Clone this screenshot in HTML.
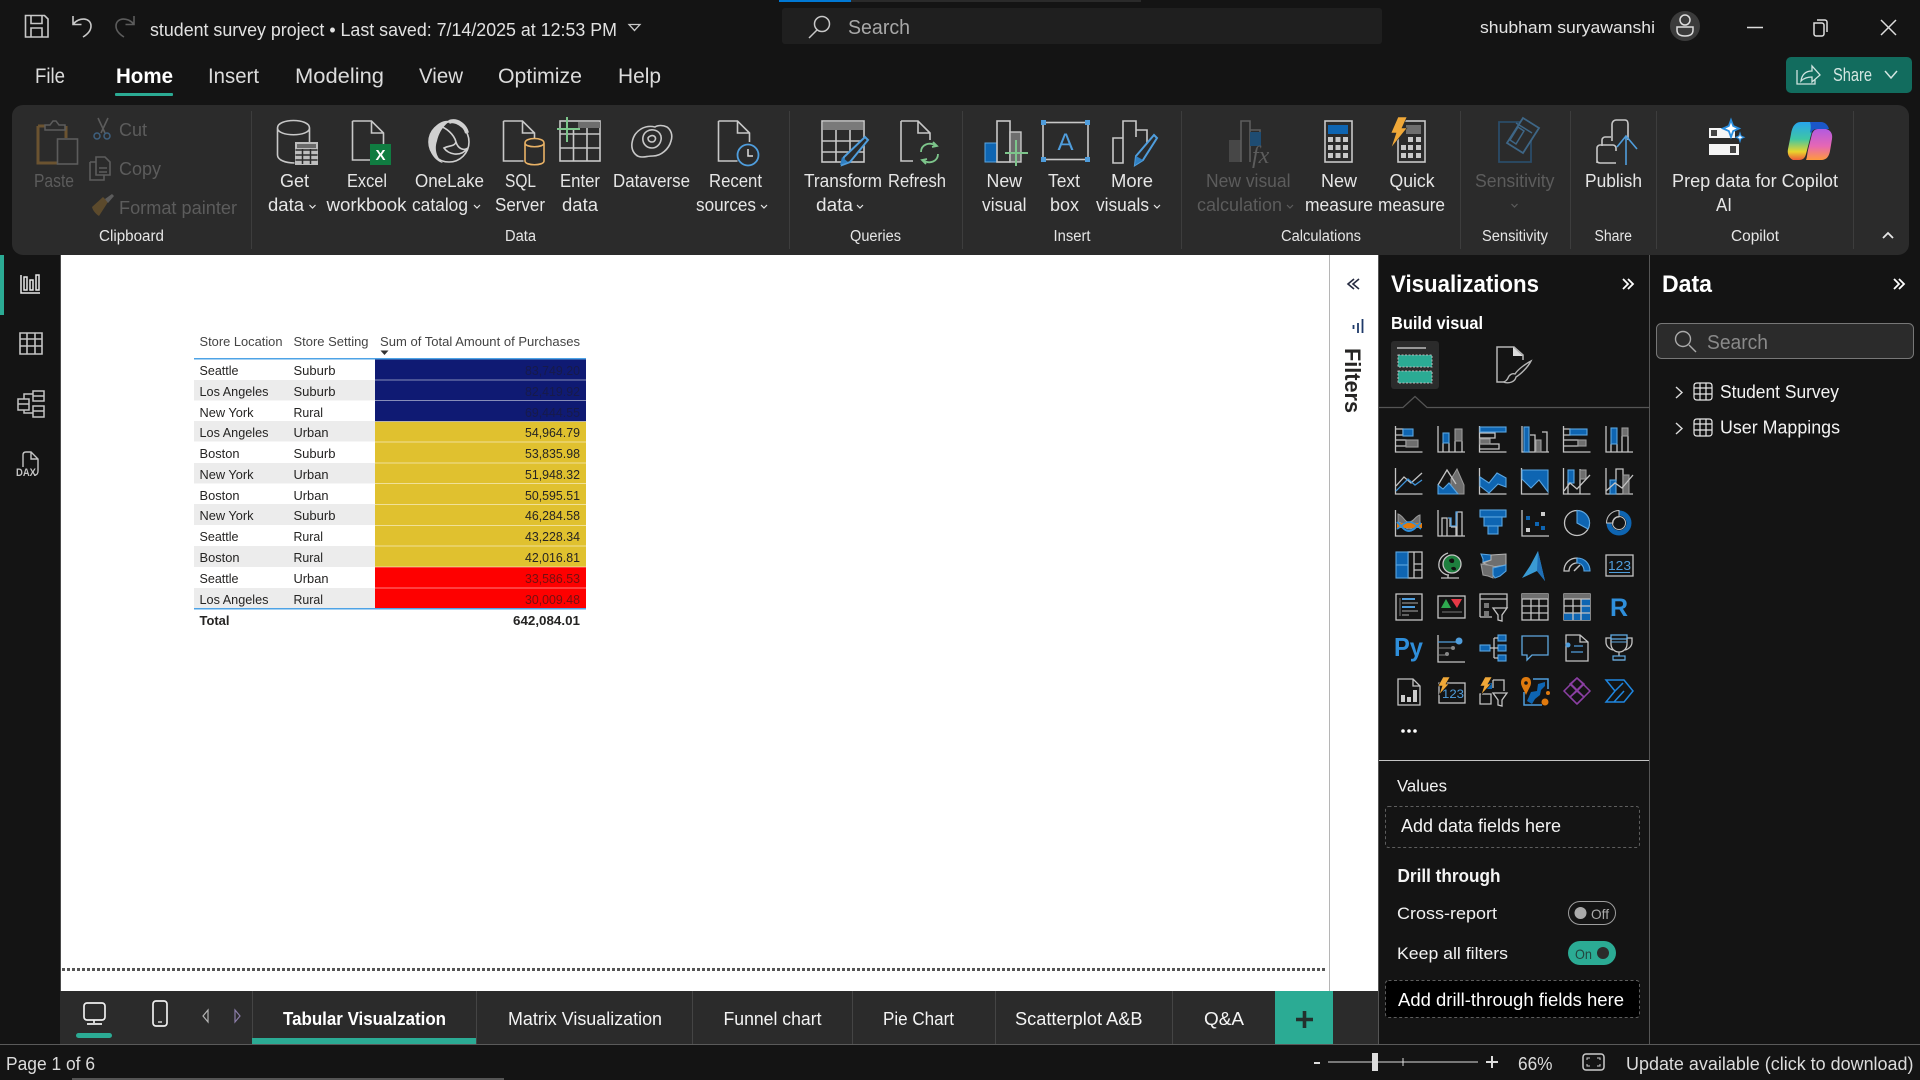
<!DOCTYPE html>
<html lang="en"><head><meta charset="utf-8"><title>student survey project - Power BI Desktop</title>
<style>
html,body{margin:0;padding:0;background:#141414;width:1920px;height:1080px;overflow:hidden}
svg{display:block}
text{font-family:"Liberation Sans",sans-serif;fill:#ececec}
.r{font-size:18px;fill:#e6e6e6}
.d{font-size:18px;fill:#5c5c5c}
.g{font-size:15.5px;fill:#e6e6e6}
.m{font-size:21px;fill:#dcdcdc}
.t{font-size:13px;fill:#444}
.v{font-size:13px;fill:#252423}
.p{font-size:18px;fill:#f4f4f4}
.l{fill:none;stroke:#c8c8c8;stroke-width:1.6}
.k{fill:none;stroke:#5c5c5c;stroke-width:1.6}
.s{fill:none;stroke:#c4c4c4;stroke-width:1.3}
.b{fill:#0e65b2;stroke:#5aa5e0;stroke-width:1.1}
.y{fill:#6e6e6e;stroke:#9a9a9a;stroke-width:1.1}
</style></head><body>
<svg xmlns="http://www.w3.org/2000/svg" width="1920" height="1080" viewBox="0 0 1920 1080">
<defs>
<linearGradient id="cg1" x1="0" y1="0" x2="0" y2="1"><stop offset="0" stop-color="#27a5ee"/><stop offset=".45" stop-color="#3fc6a4"/><stop offset=".78" stop-color="#e9d42c"/><stop offset="1" stop-color="#ee5a3a"/></linearGradient>
<linearGradient id="cg2" x1="0" y1="0" x2="0" y2="1"><stop offset="0" stop-color="#b25ae0"/><stop offset=".55" stop-color="#e667b4"/><stop offset="1" stop-color="#ff9a3e"/></linearGradient>
</defs>
<rect width="1920" height="1080" fill="#141414"/>

<!-- title bar -->
<rect x="779" y="0" width="362" height="2" fill="#2a2a2a"/><rect x="779" y="0" width="72" height="2" fill="#0078d4"/>
<g class="l"><path d="M25.500 15.500h19l3.500 3.500v18h-22.500z M31 15.500v8h11v-8 M31 37v-9h11v9"/></g>
<path class="l" d="M73 16v8.500h8.500 M73 24.500C79 16.500 91 17.500 91 26c0 4-3 8-8 11"/>
<path class="k" d="M134 16v8.500h-8.500 M134 24.500C128 16.500 116 17.500 116 26c0 4 3 8 8 11"/>
<text x="150" y="36" font-size="18" textLength="467" lengthAdjust="spacingAndGlyphs" style="fill:#e2e2e2">student survey project  •  Last saved: 7/14/2025 at 12:53 PM</text>
<path d="M629 24.500h11l-5.500 6z" fill="none" stroke="#c8c8c8" stroke-width="1.300"/>
<rect x="782" y="8" width="600" height="36" rx="3" fill="#1f1f1f"/>
<circle cx="822" cy="24" r="7.500" fill="none" stroke="#c8c8c8" stroke-width="1.500"/><path d="M817 30l-8 8" stroke="#c8c8c8" stroke-width="1.500"/>
<text x="848" y="34" font-size="20" textLength="62" lengthAdjust="spacingAndGlyphs" style="fill:#a8a8a8">Search</text>
<text x="1480" y="33" font-size="17" textLength="175" lengthAdjust="spacingAndGlyphs" style="fill:#e4e4e4">shubham suryawanshi</text>
<circle cx="1685" cy="26" r="15" fill="#3b3b3b"/><circle cx="1685" cy="20" r="5" fill="none" stroke="#ddd" stroke-width="1.500"/><path d="M1677 27h16v3c0 4-3 6-8 6s-8-2-8-6z" fill="none" stroke="#ddd" stroke-width="1.500"/>
<path d="M1747 27.500h16" stroke="#ddd" stroke-width="1.500"/>
<path d="M1814 23h8c1 0 2 1 2 2v9c0 1-1 2-2 2h-6c-1 0-2-1-2-2z M1817 20h8c1 0 2 1 2 2v10" fill="none" stroke="#ddd" stroke-width="1.500"/>
<path d="M1881 20l15 15M1896 20l-15 15" stroke="#ddd" stroke-width="1.500"/>

<!-- menu -->
<text x="35" y="83" class="m" textLength="30" lengthAdjust="spacingAndGlyphs">File</text>
<text x="116" y="83" class="m" textLength="57" lengthAdjust="spacingAndGlyphs" font-weight="700" style="fill:#fff">Home</text>
<text x="208" y="83" class="m" textLength="51" lengthAdjust="spacingAndGlyphs">Insert</text>
<text x="295" y="83" class="m" textLength="89" lengthAdjust="spacingAndGlyphs">Modeling</text>
<text x="419" y="83" class="m" textLength="44" lengthAdjust="spacingAndGlyphs">View</text>
<text x="498" y="83" class="m" textLength="84" lengthAdjust="spacingAndGlyphs">Optimize</text>
<text x="618" y="83" class="m" textLength="43" lengthAdjust="spacingAndGlyphs">Help</text>
<rect x="115" y="93" width="58" height="3" rx="1" fill="#2bab94"/>
<rect x="1786" y="57" width="126" height="36" rx="5" fill="#126c5e"/>
<path d="M1797 70v14h18v-5 M1801 81c1-7 5-10 11-10v-5l8 9-8 7v-5c-4 0-8 1-11 4z" fill="none" stroke="#cfe3df" stroke-width="1.300"/>
<text x="1833" y="81" font-size="18" textLength="39" lengthAdjust="spacingAndGlyphs" style="fill:#d4e6e2">Share</text>
<path d="M1885 71l6 7 6-7" fill="none" stroke="#d4e6e2" stroke-width="1.500"/>

<!-- ribbon -->
<rect x="12" y="105" width="1897" height="150" rx="11" fill="#2b2b2b"/>
<g stroke="#3d3d3d"><path d="M251.500 111v138M789.500 111v138M962.500 111v138M1181.500 111v138M1460.500 111v138M1570.500 111v138M1656.500 111v138M1853.500 111v138"/></g>

<!-- clipboard icons -->
<path d="M38 126h8M66 126v12M38 126v37h20" fill="none" stroke="#6b5330" stroke-width="3"/>
<path d="M45 130v-5h5l3-4h3l3 4h6v5z" fill="#2b2b2b" stroke="#5c5c5c" stroke-width="1.500"/>
<rect x="57.500" y="139" width="20" height="25" fill="#2b2b2b" stroke="#5c5c5c" stroke-width="1.600"/>
<path d="M98 118l7 15M108 118l-7 15" stroke="#5c5c5c" stroke-width="1.600"/><circle cx="97" cy="136" r="3" fill="none" stroke="#3e607f" stroke-width="1.500"/><circle cx="107" cy="136" r="3" fill="none" stroke="#3e607f" stroke-width="1.500"/>
<path d="M96 157h9l5 5v13h-14z M90 162h6 M90 162v18h14v-5 M99 168h8M99 172h8" class="k"/>
<path d="M92 207l11-10 5 5-9 14c-3-2-6-5-7-9z" fill="#5c4a2c"/><path d="M105 199l7-5 2 2-6 7z" fill="#5c5c5c"/>
<text x="34" y="187" class="d" textLength="40" lengthAdjust="spacingAndGlyphs">Paste</text>
<text x="119" y="136" class="d" textLength="28" lengthAdjust="spacingAndGlyphs">Cut</text>
<text x="119" y="175" class="d" textLength="42" lengthAdjust="spacingAndGlyphs">Copy</text>
<text x="119" y="214" class="d" textLength="118" lengthAdjust="spacingAndGlyphs">Format painter</text>
<text x="99" y="241" class="g" textLength="65" lengthAdjust="spacingAndGlyphs">Clipboard</text>

<!-- get data -->
<path d="M277.500 128c0-10 32-10 32 0v14 M277.500 128c0 9 32 9 32 0 M277.500 128v27c0 5 8 8 17 8" class="l"/>
<rect x="295" y="142" width="23" height="23" fill="#bdbdbd"/><rect x="297" y="144" width="19" height="4" fill="#6a6a6a"/>
<path d="M295.500 150h22M295.500 155h22M295.500 160h22M302.500 149v15M310.500 149v15" stroke="#2b2b2b" stroke-width="1.500"/>
<text x="280" y="187" class="r" textLength="29" lengthAdjust="spacingAndGlyphs">Get</text>
<text x="268" y="211" class="r" textLength="36" lengthAdjust="spacingAndGlyphs">data</text>
<path d="M309.500 205l3 3 3-3" fill="none" stroke="#e6e6e6" stroke-width="1.200"/>
<!-- excel -->
<path d="M352.500 121h19l12 12v11 M371.500 121v12h12 M352.500 121v39h18" class="l"/>
<rect x="370" y="144" width="21" height="21" fill="#107c41"/><text x="380.500" y="160" font-size="15" font-weight="700" text-anchor="middle" style="fill:#fff">X</text>
<text x="347" y="187" class="r" textLength="40" lengthAdjust="spacingAndGlyphs">Excel</text>
<text x="326.500" y="211" class="r" textLength="80" lengthAdjust="spacingAndGlyphs">workbook</text>
<!-- onelake -->
<circle cx="449" cy="142" r="20" fill="none" stroke="#d0d0d0" stroke-width="1.600"/>
<path d="M450 121c-10-2-20 8-21 20-1 9 5 20 14 22-6-5-9-13-6-22 2-9 7-16 13-20z" fill="#d0d0d0"/><path d="M440 126c6 2 14 8 16 16 2 7 8 9 12 6-8 10-20 6-24 0 6-3 10-1 12-6" fill="none" stroke="#d0d0d0" stroke-width="1.600"/>
<path d="M449 122c8-3 16 3 18 11" fill="none" stroke="#d0d0d0" stroke-width="4"/>
<text x="415" y="187" class="r" textLength="69" lengthAdjust="spacingAndGlyphs">OneLake</text>
<text x="412" y="211" class="r" textLength="56" lengthAdjust="spacingAndGlyphs">catalog</text>
<path d="M474 205l3 3 3-3" fill="none" stroke="#e6e6e6" stroke-width="1.200"/>
<!-- sql -->
<path d="M503.500 121h19l12 12v5 M522.500 121v12h12 M503.500 121v40h20" class="l"/>
<path d="M525 143c0-6 19-6 19 0v18c0 5-19 5-19 0z M525 143c0 5 19 5 19 0" fill="none" stroke="#e9b266" stroke-width="1.600"/>
<text x="505" y="187" class="r" textLength="31" lengthAdjust="spacingAndGlyphs">SQL</text>
<text x="495" y="211" class="r" textLength="50" lengthAdjust="spacingAndGlyphs">Server</text>
<!-- enter data -->
<rect x="560" y="121" width="40" height="40" fill="none" stroke="#c8c8c8" stroke-width="1.600"/><rect x="578" y="122" width="22" height="6" fill="#6e6e6e"/>
<path d="M560 134h40M560 148h40M573.500 128v33M587 128v33" class="l"/>
<path d="M567 117v25M557 129h23" stroke="#7dc58b" stroke-width="2"/>
<text x="560" y="187" class="r" textLength="40" lengthAdjust="spacingAndGlyphs">Enter</text>
<text x="562" y="211" class="r" textLength="36" lengthAdjust="spacingAndGlyphs">data</text>
<!-- dataverse -->
<path d="M642 157c-7 0-11-7-10-14 1-7 4-11 9-14 5-3 10-3 14-2 3-2 8-2 12 0 4 3 6 8 4 14-2 8-10 15-18 15-4 0-8 1-11 1z M652 148c-6 0-10-5-9-11 1-5 6-8 11-7s8 5 7 10c-1 5-5 8-9 8z M652 142c-3 0-4-2-4-4 1-2 4-3 6-2 3 2 1 6-2 6z" class="l"/>
<text x="613" y="187" class="r" textLength="77" lengthAdjust="spacingAndGlyphs">Dataverse</text>
<!-- recent -->
<path d="M718.500 121h19l12 12v9 M737.500 121v12h12 M718.500 121v40h19" class="l"/>
<circle cx="748" cy="155" r="10.500" fill="#2b2b2b" stroke="#4f9ddc" stroke-width="1.800"/><path d="M748 149v7h5" fill="none" stroke="#ddd" stroke-width="1.500"/>
<text x="709" y="187" class="r" textLength="53" lengthAdjust="spacingAndGlyphs">Recent</text>
<text x="696" y="211" class="r" textLength="60" lengthAdjust="spacingAndGlyphs">sources</text>
<path d="M761 205l3 3 3-3" fill="none" stroke="#e6e6e6" stroke-width="1.200"/>
<text x="505" y="241" class="g" textLength="31" lengthAdjust="spacingAndGlyphs">Data</text>

<!-- queries -->
<rect x="822" y="121" width="42" height="41" class="l"/><rect x="823" y="122" width="40" height="8" fill="#7a7a7a"/>
<path d="M822 141h42M822 152h42M836 130v32M850 130v32" class="l"/>
<path d="M865 137l3 3-18 22-8 3 2-8z" fill="#2b2b2b" stroke="#4f9ddc" stroke-width="2"/><path d="M842 157l-2 8 8-3z" fill="#2f7fc1"/>
<text x="804" y="187" class="r" textLength="78" lengthAdjust="spacingAndGlyphs">Transform</text>
<text x="816" y="211" class="r" textLength="37" lengthAdjust="spacingAndGlyphs">data</text>
<path d="M857 205l3 3 3-3" fill="none" stroke="#e6e6e6" stroke-width="1.200"/>
<path d="M901 121h17l12 12v7 M918 121v12h12 M901 121v40h12" class="l"/>
<path d="M921 152c0-7 8-11 15-6M938 154c0 7-8 11-15 6 M933 142l4 4-5 1 M926 164l-4-4 5-1" fill="none" stroke="#7dc58b" stroke-width="1.800"/>
<text x="888" y="187" class="r" textLength="58" lengthAdjust="spacingAndGlyphs">Refresh</text>
<text x="850" y="241" class="g" textLength="51" lengthAdjust="spacingAndGlyphs">Queries</text>

<!-- insert -->
<rect x="985" y="143" width="12" height="19" fill="#0e65b2" stroke="#5aa5e0"/><rect x="997" y="121" width="13" height="41" class="l"/><rect x="1010" y="132" width="11" height="30" fill="#6e6e6e" stroke="#c8c8c8" stroke-width="1.400"/>
<path d="M1016 140v26M1005 153h23" stroke="#7dc58b" stroke-width="2"/>
<text x="986.500" y="187" class="r" textLength="35.500" lengthAdjust="spacingAndGlyphs">New</text>
<text x="982" y="211" class="r" textLength="44.500" lengthAdjust="spacingAndGlyphs">visual</text>
<rect x="1043" y="122.500" width="45" height="37" class="l"/>
<rect x="1041" y="120" width="5" height="5" fill="#4f9ddc"/><rect x="1085" y="120" width="5" height="5" fill="#4f9ddc"/><rect x="1041" y="157" width="5" height="5" fill="#4f9ddc"/><rect x="1085" y="157" width="5" height="5" fill="#4f9ddc"/>
<text x="1065.500" y="150" font-size="24" text-anchor="middle" style="fill:#4f9ddc">A</text>
<text x="1048" y="187" class="r" textLength="32" lengthAdjust="spacingAndGlyphs">Text</text>
<text x="1050" y="211" class="r" textLength="29" lengthAdjust="spacingAndGlyphs">box</text>
<path d="M1113 138h10v25h-10z M1123 163V121h13v16 M1136 130h11v14" class="l"/>
<path d="M1154 135l3 3-14 22-8 5 1-9z" fill="#2b2b2b" stroke="#4f9ddc" stroke-width="2"/>
<path d="M1136 156l-1 9 8-5z" fill="#2f7fc1"/>
<text x="1111" y="187" class="r" textLength="42" lengthAdjust="spacingAndGlyphs">More</text>
<text x="1096" y="211" class="r" textLength="53" lengthAdjust="spacingAndGlyphs">visuals</text>
<path d="M1154 205l3 3 3-3" fill="none" stroke="#e6e6e6" stroke-width="1.200"/>
<text x="1053.500" y="241" class="g" textLength="37" lengthAdjust="spacingAndGlyphs">Insert</text>

<!-- calculations -->
<rect x="1229" y="140" width="12" height="22" fill="#474747"/><path d="M1241 162v-41h9v41M1250 130h10v12" class="k"/><rect x="1250" y="132" width="11" height="14" fill="#1e4c72"/>
<text x="1252" y="163" font-size="24" font-style="italic" style="font-family:'Liberation Serif',serif;fill:#5c5c5c">fx</text>
<text x="1206" y="187" class="d" textLength="84.500" lengthAdjust="spacingAndGlyphs">New visual</text>
<text x="1197" y="211" class="d" textLength="85" lengthAdjust="spacingAndGlyphs">calculation</text>
<path d="M1287 205l3 3 3-3" fill="none" stroke="#5c5c5c" stroke-width="1.200"/>
<rect x="1325" y="121" width="27" height="41" class="l"/><rect x="1328" y="125" width="20" height="9" fill="#0e65b2"/>
<g fill="#c8c8c8"><rect x="1328" y="137" width="5" height="5"/><rect x="1335.500" y="137" width="5" height="5"/><rect x="1343" y="137" width="5" height="5"/><rect x="1328" y="145" width="5" height="5"/><rect x="1335.500" y="145" width="5" height="5"/><rect x="1343" y="145" width="5" height="5"/><rect x="1328" y="153" width="5" height="5"/><rect x="1335.500" y="153" width="5" height="5"/><rect x="1343" y="153" width="5" height="5"/></g>
<text x="1321" y="187" class="r" textLength="36" lengthAdjust="spacingAndGlyphs">New</text>
<text x="1305" y="211" class="r" textLength="68" lengthAdjust="spacingAndGlyphs">measure</text>
<rect x="1398" y="121" width="27" height="41" class="l"/><rect x="1406" y="125" width="15" height="9" fill="#6e6e6e"/>
<g fill="#c8c8c8"><rect x="1408" y="137" width="5" height="5"/><rect x="1416" y="137" width="5" height="5"/><rect x="1401" y="145" width="5" height="5"/><rect x="1408" y="145" width="5" height="5"/><rect x="1416" y="145" width="5" height="5"/><rect x="1401" y="153" width="5" height="5"/><rect x="1408" y="153" width="5" height="5"/><rect x="1416" y="153" width="5" height="5"/></g>
<path d="M1398 117h9l-5 11h5l-16 20 5-15h-5z" fill="#f0a838" stroke="#2b2b2b" stroke-width=".6"/>
<text x="1389.500" y="187" class="r" textLength="45" lengthAdjust="spacingAndGlyphs">Quick</text>
<text x="1378" y="211" class="r" textLength="67" lengthAdjust="spacingAndGlyphs">measure</text>
<text x="1281" y="241" class="g" textLength="80" lengthAdjust="spacingAndGlyphs">Calculations</text>

<!-- sensitivity -->
<path d="M1530 122h-31v40h32v-26" fill="none" stroke="#2b4c68" stroke-width="1.800"/>
<path d="M1523 118l16 10-16 25-16-10z" fill="#2b2b2b" stroke="#3e6686" stroke-width="1.800"/><path d="M1516 123l16 10M1510 140l6 4 8-13-6-4z" fill="none" stroke="#3e6686" stroke-width="1.500"/>
<text x="1475" y="187" class="d" textLength="79.500" lengthAdjust="spacingAndGlyphs">Sensitivity</text>
<path d="M1511.500 204l3 3 3-3" fill="none" stroke="#5c5c5c" stroke-width="1.200"/>
<text x="1482" y="241" class="g" textLength="66" lengthAdjust="spacingAndGlyphs">Sensitivity</text>
<!-- share -->
<path d="M1612 141v-17c0-2 2-4 4-4h9c2 0 3 2 3 4v16 M1602 146v-6c0-2 2-3 3-3h6 M1597 163v-15c0-2 2-3 3-3h13c2 0 3 2 3 3v3M1616 163h-16c-2 0-3-1-3-3" class="l"/>
<path d="M1626 165v-29M1617 147l9-11 11 13" fill="none" stroke="#4f9ddc" stroke-width="1.600"/>
<text x="1585" y="187" class="r" textLength="57" lengthAdjust="spacingAndGlyphs">Publish</text>
<text x="1594.500" y="241" class="g" textLength="37.500" lengthAdjust="spacingAndGlyphs">Share</text>

<!-- copilot -->
<rect x="1709" y="128" width="26" height="10" fill="#f5f5f5"/><rect x="1711" y="130" width="6" height="6" fill="#444"/>
<rect x="1709" y="144" width="30" height="11" fill="#f5f5f5"/><rect x="1730" y="146" width="6" height="7" fill="#444"/>
<path d="M1731 120l2.200 6 5.800 2.500-5.800 2.500-2.200 6-2.200-6-5.800-2.500 5.800-2.500z" fill="#fff" stroke="#2a8ee0" stroke-width="1.800"/>
<path d="M1740 133l1 3 3 1.300-3 1.300-1 3-1-3-3-1.300 3-1.300z" fill="#fff" stroke="#2a8ee0" stroke-width="1.100"/>
<path d="M1801 122h20c-5 1-8 4-9 9l-6 23c-1 4-3 6-7 6h-6c-4-2-6-6-5-11l3-15c1-7 4-12 10-12z" fill="url(#cg1)"/>
<path d="M1806 160h15c6 0 8-4 9-9l2-12c1-6-2-9-6-10h-8c-3 0-5 2-6 5l-4 16c-1 5-1 8-2 10z" fill="url(#cg2)"/>
<path d="M1810 122h11c4 0 7 3 8 7h-13c-2 0-4 2-5 4l-1-1c1-3 1-7 0-10z" fill="#1b57c8"/>
<text x="1672" y="187" class="r" textLength="166" lengthAdjust="spacingAndGlyphs">Prep data for Copilot</text>
<text x="1716" y="211" class="r" textLength="16" lengthAdjust="spacingAndGlyphs">AI</text>
<text x="1731" y="241" class="g" textLength="48" lengthAdjust="spacingAndGlyphs">Copilot</text>
<path d="M1883 238l5-5 5 5" fill="none" stroke="#e6e6e6" stroke-width="1.800"/>

<!-- left rail -->
<rect x="0" y="255" width="4" height="60" fill="#2bab94"/>
<rect x="60" y="255" width="1" height="736" fill="#4a4a4a"/>
<path d="M21 275v18h19M24 290v-13h3v13zM30 290v-10h3v10zM36 290v-15h3v15z" fill="none" stroke="#e8e8e8" stroke-width="1.500"/>
<path d="M20 333h22v21h-22z M20 339h22M20 346h22M27 333v21M35 333v21" fill="none" stroke="#c4c4c4" stroke-width="1.600"/>
<path d="M18 399h11v11h-11z M18 404h11M33 391h11v10h-11z M33 396h11M33 406h11v11h-11z M33 411h11M24 399v-5h9M24 410v3h9" fill="none" stroke="#c4c4c4" stroke-width="1.500"/>
<path d="M23 467v-12c0-2 1-3 3-3h5l7 7v12c0 2-1 4-3 4h-1 M31 452v7h7" fill="none" stroke="#c4c4c4" stroke-width="1.400"/>
<text x="16" y="476" font-size="11" font-weight="700" textLength="20" lengthAdjust="spacingAndGlyphs" style="fill:#c4c4c4">DAX</text>

<!-- canvas -->
<rect x="61" y="255" width="1317" height="736" fill="#fff"/>
<rect x="1329" y="255" width="1" height="736" fill="#b5b5b5"/>
<path d="M1359 279l-6 5 6 5M1354 279l-6 5 6 5" fill="none" stroke="#252a40" stroke-width="1.600"/>
<path d="M1362.500 319v14M1358 323v10M1353.500 325v4" stroke="#1f3a6a" stroke-width="1.800"/>
<text transform="translate(1345 348) rotate(90)" font-size="22" font-weight="700" textLength="65" lengthAdjust="spacingAndGlyphs" style="fill:#252423">Filters</text>
<line x1="62" y1="969.500" x2="1327" y2="969.500" stroke="#555" stroke-width="3" stroke-dasharray="3 2"/>

<!-- table -->
<text x="199.500" y="346" class="t" textLength="83" lengthAdjust="spacingAndGlyphs">Store Location</text>
<text x="293.500" y="346" class="t" textLength="75" lengthAdjust="spacingAndGlyphs">Store Setting</text>
<text x="380" y="346" class="t" textLength="200" lengthAdjust="spacingAndGlyphs">Sum of Total Amount of Purchases</text>
<path d="M380.500 350.500h8l-4 4.500z" fill="#333"/>
<g fill="#ececec"><rect x="194" y="380" width="181" height="20.500"/><rect x="194" y="421" width="181" height="20.500"/><rect x="194" y="463" width="181" height="20.500"/><rect x="194" y="504" width="181" height="21"/><rect x="194" y="546" width="181" height="21"/><rect x="194" y="588" width="181" height="20.500"/></g>
<rect x="375" y="359" width="211" height="62.500" fill="#0f1a73"/>
<rect x="375" y="421.500" width="211" height="145.500" fill="#e0c12f"/>
<rect x="375" y="567" width="211" height="41.500" fill="#fe0000"/>
<g stroke="#fff" stroke-opacity=".5" stroke-width="1"><path d="M375 380h211M375 400.500h211M375 421.500h211M375 442h211M375 463h211M375 483.500h211M375 504.500h211M375 525.500h211M375 546h211M375 567h211M375 588h211"/></g>
<rect x="194" y="358" width="392" height="1.500" fill="#4ea3e6"/><rect x="194" y="608" width="392" height="1.500" fill="#4ea3e6"/>
<g>
<text x="199.500" y="375" class="v" textLength="39" lengthAdjust="spacingAndGlyphs">Seattle</text><text x="293.500" y="375" class="v" textLength="42" lengthAdjust="spacingAndGlyphs">Suburb</text>
<text x="199.500" y="396" class="v" textLength="69" lengthAdjust="spacingAndGlyphs">Los Angeles</text><text x="293.500" y="396" class="v" textLength="42" lengthAdjust="spacingAndGlyphs">Suburb</text>
<text x="199.500" y="417" class="v" textLength="54" lengthAdjust="spacingAndGlyphs">New York</text><text x="293.500" y="417" class="v" textLength="29.500" lengthAdjust="spacingAndGlyphs">Rural</text>
<text x="199.500" y="437" class="v" textLength="69" lengthAdjust="spacingAndGlyphs">Los Angeles</text><text x="293.500" y="437" class="v" textLength="35" lengthAdjust="spacingAndGlyphs">Urban</text>
<text x="199.500" y="458" class="v" textLength="40" lengthAdjust="spacingAndGlyphs">Boston</text><text x="293.500" y="458" class="v" textLength="42" lengthAdjust="spacingAndGlyphs">Suburb</text>
<text x="199.500" y="479" class="v" textLength="54" lengthAdjust="spacingAndGlyphs">New York</text><text x="293.500" y="479" class="v" textLength="35" lengthAdjust="spacingAndGlyphs">Urban</text>
<text x="199.500" y="500" class="v" textLength="40" lengthAdjust="spacingAndGlyphs">Boston</text><text x="293.500" y="500" class="v" textLength="35" lengthAdjust="spacingAndGlyphs">Urban</text>
<text x="199.500" y="520" class="v" textLength="54" lengthAdjust="spacingAndGlyphs">New York</text><text x="293.500" y="520" class="v" textLength="42" lengthAdjust="spacingAndGlyphs">Suburb</text>
<text x="199.500" y="541" class="v" textLength="39" lengthAdjust="spacingAndGlyphs">Seattle</text><text x="293.500" y="541" class="v" textLength="29.500" lengthAdjust="spacingAndGlyphs">Rural</text>
<text x="199.500" y="562" class="v" textLength="40" lengthAdjust="spacingAndGlyphs">Boston</text><text x="293.500" y="562" class="v" textLength="29.500" lengthAdjust="spacingAndGlyphs">Rural</text>
<text x="199.500" y="583" class="v" textLength="39" lengthAdjust="spacingAndGlyphs">Seattle</text><text x="293.500" y="583" class="v" textLength="35" lengthAdjust="spacingAndGlyphs">Urban</text>
<text x="199.500" y="604" class="v" textLength="69" lengthAdjust="spacingAndGlyphs">Los Angeles</text><text x="293.500" y="604" class="v" textLength="29.500" lengthAdjust="spacingAndGlyphs">Rural</text>
</g>
<g>
<text x="525" y="375" class="v" textLength="55" lengthAdjust="spacingAndGlyphs" style="fill:#171a4a">83,749.20</text>
<text x="525" y="396" class="v" textLength="55" lengthAdjust="spacingAndGlyphs" style="fill:#171a4a">82,419.92</text>
<text x="525" y="417" class="v" textLength="55" lengthAdjust="spacingAndGlyphs" style="fill:#171a4a">69,444.55</text>
<text x="525" y="437" class="v" textLength="55" lengthAdjust="spacingAndGlyphs">54,964.79</text>
<text x="525" y="458" class="v" textLength="55" lengthAdjust="spacingAndGlyphs">53,835.98</text>
<text x="525" y="479" class="v" textLength="55" lengthAdjust="spacingAndGlyphs">51,948.32</text>
<text x="525" y="500" class="v" textLength="55" lengthAdjust="spacingAndGlyphs">50,595.51</text>
<text x="525" y="520" class="v" textLength="55" lengthAdjust="spacingAndGlyphs">46,284.58</text>
<text x="525" y="541" class="v" textLength="55" lengthAdjust="spacingAndGlyphs">43,228.34</text>
<text x="525" y="562" class="v" textLength="55" lengthAdjust="spacingAndGlyphs">42,016.81</text>
<text x="525" y="583" class="v" textLength="55" lengthAdjust="spacingAndGlyphs" style="fill:#741010">33,586.53</text>
<text x="525" y="604" class="v" textLength="55" lengthAdjust="spacingAndGlyphs" style="fill:#741010">30,009.48</text>
</g>
<text x="199.500" y="625" class="v" font-weight="700" textLength="30" lengthAdjust="spacingAndGlyphs">Total</text>
<text x="513" y="625" class="v" font-weight="700" textLength="67" lengthAdjust="spacingAndGlyphs">642,084.01</text>

<!-- tabs -->
<rect x="60" y="991" width="1318" height="53" fill="#2b2b2b"/>
<path d="M252.500 991v53M476.500 991v53M692.500 991v53M852.500 991v53M995.500 991v53M1172.500 991v53" stroke="#444"/>
<rect x="252" y="1038" width="224" height="6" fill="#2bab94"/>
<rect x="1275" y="991" width="58" height="53" fill="#2bab94"/>
<path d="M1304.500 1011v17M1296 1019.500h17" stroke="#23302d" stroke-width="3.600"/>
<rect x="84" y="1003" width="21" height="17" rx="3" fill="none" stroke="#eee" stroke-width="1.700"/><path d="M94 1020v3M87 1024h15" stroke="#eee" stroke-width="1.700"/>
<rect x="76" y="1033" width="36" height="5" rx="2.500" fill="#2bab94"/>
<rect x="153" y="1001" width="14" height="25" rx="3" fill="none" stroke="#eee" stroke-width="1.700"/><path d="M158 1022h4" stroke="#eee" stroke-width="1.300"/>
<path d="M208 1010l-5 6 5 6z" fill="none" stroke="#b5b5b5" stroke-width="1.200"/>
<path d="M235 1010l5 6-5 6z" fill="none" stroke="#8b7da8" stroke-width="1.200"/>
<text x="283" y="1025" class="p" font-weight="700" textLength="163" lengthAdjust="spacingAndGlyphs" style="fill:#fff">Tabular Visualzation</text>
<text x="508" y="1025" class="p" textLength="154" lengthAdjust="spacingAndGlyphs">Matrix Visualization</text>
<text x="723.500" y="1025" class="p" textLength="98" lengthAdjust="spacingAndGlyphs">Funnel chart</text>
<text x="883" y="1025" class="p" textLength="71" lengthAdjust="spacingAndGlyphs">Pie Chart</text>
<text x="1015" y="1025" class="p" textLength="127.500" lengthAdjust="spacingAndGlyphs">Scatterplot A&amp;B</text>
<text x="1204" y="1025" class="p" textLength="40" lengthAdjust="spacingAndGlyphs">Q&amp;A</text>

<!-- status bar -->
<rect x="0" y="1044" width="1920" height="1" fill="#5a5a5a"/>
<text x="6" y="1070" class="p" textLength="89" lengthAdjust="spacingAndGlyphs" style="fill:#dcdcdc">Page 1 of 6</text>
<rect x="72" y="1078" width="432" height="2" fill="#555"/>
<path d="M1314 1063h6" stroke="#ddd" stroke-width="2"/>
<path d="M1328 1062h150M1403 1058v8" stroke="#ddd" stroke-width="1"/>
<rect x="1372" y="1053" width="6" height="18" fill="#ddd"/>
<path d="M1492 1056v12M1486 1062h12" stroke="#ddd" stroke-width="2"/>
<text x="1518" y="1070" class="p" textLength="34.500" lengthAdjust="spacingAndGlyphs" style="fill:#dcdcdc">66%</text>
<rect x="1583" y="1054" width="21" height="16" rx="3" fill="none" stroke="#ccc" stroke-width="1.500"/><path d="M1587 1060v-2h3M1600 1060v-2h-3M1587 1064v2h3M1600 1064v2h-3" fill="none" stroke="#ccc"/>
<text x="1626" y="1070" class="p" textLength="287.500" lengthAdjust="spacingAndGlyphs" style="fill:#dcdcdc">Update available (click to download)</text>

<!-- panes -->
<rect x="1378" y="255" width="1" height="789" fill="#555"/>
<rect x="1649" y="255" width="1" height="789" fill="#555"/>
<text x="1391" y="292" font-size="24" font-weight="700" textLength="148" lengthAdjust="spacingAndGlyphs" style="fill:#fff">Visualizations</text>
<path d="M1623 279l5 5-5 5M1628 279l5 5-5 5" fill="none" stroke="#fff" stroke-width="1.800"/>
<text x="1391" y="329" font-size="17.500" font-weight="700" textLength="92" lengthAdjust="spacingAndGlyphs" style="fill:#fff">Build visual</text>
<rect x="1391" y="341" width="48" height="48" rx="3" fill="#2b2b2b"/>
<path d="M1397 348h29" stroke="#bbb" stroke-width="1.500"/>
<rect x="1398" y="355" width="34" height="12" fill="#2bab94" stroke="#bbb" stroke-dasharray="2 1.500"/><rect x="1398" y="371" width="34" height="12" fill="#2bab94" stroke="#bbb" stroke-dasharray="2 1.500"/>
<path d="M1523 360v-5l-9-8h-17v35h6" fill="none" stroke="#b5b5b5" stroke-width="1.500"/><path d="M1513 347v9h10z" fill="#ddd"/>
<path d="M1531 361c-4 2-13 8-16 13-3-1-6 1-7 4-1 2-3 4-5 4 6 2 12 0 13-5 5-3 12-10 15-16z" fill="none" stroke="#b5b5b5" stroke-width="1.400"/>
<path d="M1379 407.500h24l12-11 12 11h222" fill="none" stroke="#555" stroke-width="1.200"/>
<rect x="1379" y="760" width="270" height="1" fill="#c4c4c4"/>

<!-- visual gallery -->
<g transform="translate(1395 425)"><path class="s" d="M.5 1v26h27M1 4h7v6H1M1 15h10v6H1"/><rect class="b" x="8" y="4" width="10" height="7"/><rect class="y" x="11" y="15" width="12" height="7"/></g>
<g transform="translate(1437 425)"><path class="s" d="M1 1v26h27M6 18v9M12 18v9M18 16v11M25 16v11"/><rect class="b" x="6" y="8" width="6" height="10"/><rect class="y" x="18" y="4" width="7" height="12"/></g>
<g transform="translate(1479 425)"><path class="s" d="M.5 1v26h27M1 8h15v5H1M1 19h19v5H1"/><rect class="b" x="1" y="2" width="26" height="5"/><rect class="y" x="1" y="14" width="10" height="5"/></g>
<g transform="translate(1521 425)"><path class="s" d="M1 1v26h27M9 10h5v17M21 7h5v20"/><rect class="b" x="3" y="2" width="5" height="25"/><rect class="y" x="15" y="15" width="5" height="12"/></g>
<g transform="translate(1563 425)"><path class="s" d="M.5 1v26h27M1 4h6v6H1M1 15h14v6H1"/><rect class="b" x="7" y="4" width="17" height="6"/><rect class="y" x="15" y="15" width="8" height="6"/></g>
<g transform="translate(1605 425)"><path class="s" d="M1 1v26h27M6 19v8h6v-8M17 11v16h6V11"/><rect class="b" x="6" y="3" width="6" height="16"/><rect class="y" x="17" y="3" width="6" height="8"/></g>

<g transform="translate(1395 467)"><path class="s" d="M.5 1v26h27M1 19l8-9 7 6 11-10"/><path d="M1 24l12-12 7 6 7-5" fill="none" stroke="#3f93d8" stroke-width="1.300"/></g>
<g transform="translate(1437 467)"><path d="M14 12l6-10 7 16v9H14z" fill="#6e6e6e" stroke="#9a9a9a"/><path class="s" d="M1 18L10 3l9 14"/><path class="b" d="M1 27v-9l5 4 6-6 9 11z"/></g>
<g transform="translate(1479 467)"><path class="s" d="M.5 1v26h27"/><path class="b" d="M1 10l9 6 8-10 9 5v9l-8-3-9 9-9-7z"/></g>
<g transform="translate(1521 467)"><path class="s" d="M.5 1v26h27"/><path class="b" d="M1 3h26v22l-9-12-8 8-9-9z"/></g>
<g transform="translate(1563 467)"><path class="s" d="M.5 1v26h27M5 14v13h6M17 2v25h6"/><rect class="b" x="5" y="3" width="6" height="13"/><rect class="y" x="17" y="3" width="6" height="9"/><path class="s" d="M1 24l6-8 7 6 13-14"/></g>
<g transform="translate(1605 467)"><path class="s" d="M1 1v26h27M11 14V2h7v25"/><rect class="b" x="5" y="13" width="6" height="14"/><rect class="y" x="18" y="8" width="6" height="19"/><path class="s" d="M1 24l9-8 7 5 11-13"/></g>

<g transform="translate(1395 509)"><path class="s" d="M.5 1v26h27"/><path d="M3 5c6 2 6 8 11 8s6-6 11-7v8c-5 1-6 6-11 6s-5-6-11-7z" fill="#6e6e6e" stroke="#9a9a9a"/><rect x="2" y="14" width="25" height="5" fill="#e07a0e"/><path d="M2 13c4 3 7 9 12 9s8-6 12-8" fill="none" stroke="#2f8fdb" stroke-width="2"/><path d="M2 20c4-2 7-7 12-7s8 4 12 7" fill="none" stroke="#2f8fdb" stroke-width="1.500"/></g>
<g transform="translate(1437 509)"><path class="s" d="M1 1v26h27M5 27V9h5v18M13 18V9M20 27V3h5v24"/><path d="M11 9h3v8h5V3h2" fill="none" stroke="#4f9ddc" stroke-width="1.300"/><path class="s" d="M14 18h5v9"/></g>
<g transform="translate(1479 509)"><rect class="b" x="1" y="1" width="26" height="7"/><rect class="b" x="5" y="8" width="18" height="9"/><rect class="b" x="9" y="17" width="10" height="8"/></g>
<g transform="translate(1521 509)"><path class="s" d="M1 1v26h27"/><g fill="#0e65b2"><rect x="5" y="7" width="4" height="4"/><rect x="14" y="13" width="4" height="4"/><rect x="20" y="17" width="4" height="4"/></g><g fill="#ccc"><rect x="20" y="3" width="4" height="4"/><rect x="5" y="19" width="4" height="4"/></g></g>
<g transform="translate(1563 509)"><circle cx="14" cy="14" r="12.500" class="s"/><path class="b" d="M14 1.500A12.500 12.500 0 0 1 25 20L14 14z"/></g>
<g transform="translate(1605 509)"><circle cx="14" cy="14" r="10" fill="none" stroke="#0e65b2" stroke-width="5"/><path d="M14 1.500A12.500 12.500 0 0 0 1.500 14H8A6 6 0 0 1 14 8z" fill="#141414" stroke="#c4c4c4"/><circle cx="14" cy="14" r="6.500" fill="none" stroke="#c4c4c4"/></g>

<g transform="translate(1395 551)"><rect class="s" x="13" y="1" width="14" height="26"/><path class="s" d="M19 1v26M19 13h8M19 19h8"/><rect class="b" x="1" y="1" width="12" height="13"/><rect class="b" x="1" y="14" width="12" height="13"/></g>
<g transform="translate(1437 551)"><circle cx="15" cy="13" r="9" fill="#1e7f3e" stroke="#c4c4c4" stroke-width="1.300"/><path d="M12 9c3-3 6-1 5 2-1 2-5 1-5-2zM14 17c2-2 5-1 5 1s-4 2-5-1z" fill="#111"/><path class="s" d="M11 2C5 4 1 9 2 16c1 4 5 8 10 8M11 24v3M4 27h18"/></g>
<g transform="translate(1479 551)"><path d="M2 3l10 1v5l-8 2v-3z" class="b"/><path d="M12 4l15-1v11l-13 2-10-4 8-3z" fill="#6e6e6e" stroke="#b5b5b5"/><path class="y" d="M2 13l12 2v12l-5-2-5-1z"/><path class="b" d="M14 17l13-3v6l-6 5-5 2-2-3z"/></g>
<g transform="translate(1521 551)"><path d="M17 0L9 15 1 27l15-7 8 10z" fill="#3a9bd4"/><path d="M17 0L16 20l8 10z" fill="#1f6fb6"/></g>
<g transform="translate(1563 551)"><path class="s" d="M1 20C1 12 7 7 14 7v5c-5 0-8 4-8 8z"/><path class="b" d="M14 7c8 0 13 6 13 13h-6c0-5-3-8-7-8z"/><path d="M11 20l6-6" stroke="#c4c4c4" stroke-width="1.500"/></g>
<g transform="translate(1605 551)"><rect class="s" x="1" y="4" width="27" height="21"/><text x="3" y="19" font-size="13" textLength="23" lengthAdjust="spacingAndGlyphs" style="fill:#4f9ddc">123</text><path d="M4 21.500h21" stroke="#4f9ddc"/></g>

<g transform="translate(1395 593)"><rect class="s" x="1" y="1" width="26" height="26"/><path d="M5 5v18" stroke="#777"/><path d="M7 6h13M7 14h13" stroke="#4f9ddc" stroke-width="2"/><path d="M7 10h16M7 18h16M7 22h7" stroke="#777" stroke-width="1.500"/></g>
<g transform="translate(1437 593)"><rect class="s" x="1" y="3" width="27" height="22"/><path d="M4 15l5-9 5 9z" fill="#2fa84f"/><path d="M14 6h11l-5 9z" fill="#e63946"/><path d="M5 19h20" stroke="#777"/></g>
<g transform="translate(1479 593)"><path class="s" d="M1 24V1h27v14M1 6h27M1 24h12"/><rect x="5" y="10" width="5" height="5" fill="#777"/><rect x="5" y="18" width="5" height="5" fill="#777"/><path d="M14 15h14l-5 7v6l-4-1v-5z" fill="#141414" stroke="#c4c4c4" stroke-width="1.300"/></g>
<g transform="translate(1521 593)"><rect class="s" x="1" y="1" width="26" height="26"/><rect x="1" y="1" width="26" height="5" fill="#6e6e6e"/><path class="s" d="M1 6h26M1 13h26M1 20h26M10 6v21M18 6v21"/></g>
<g transform="translate(1563 593)"><rect class="s" x="1" y="1" width="26" height="26"/><rect x="1" y="1" width="26" height="5" fill="#6e6e6e"/><rect x="18" y="6" width="9" height="21" fill="#0e65b2"/><rect x="1" y="20" width="26" height="7" fill="#0e65b2"/><path class="s" d="M1 6h26M1 13h26M1 20h26M10 6v21M18 6v21"/></g>
<text x="1610" y="616" font-size="25" font-weight="700" style="fill:#2f8fdb">R</text>

<text x="1394" y="656" font-size="26" font-weight="700" style="fill:#2f8fdb" textLength="29" lengthAdjust="spacingAndGlyphs">Py</text>
<g transform="translate(1437 634)"><path class="s" d="M1 1v27h27"/><path d="M1 8h19" stroke="#4f9ddc" stroke-width="1.300"/><circle cx="22" cy="7" r="3.500" fill="#4f9ddc"/><path d="M1 14h14M1 21h9" stroke="#888"/><circle cx="16" cy="14" r="2" fill="#888"/><circle cx="10" cy="20" r="2" fill="#888"/></g>
<g transform="translate(1479 634)"><rect class="b" x="1" y="11" width="10" height="6"/><rect class="b" x="19" y="1" width="8" height="6"/><rect class="b" x="19" y="11" width="8" height="6"/><rect class="b" x="19" y="21" width="8" height="6"/><path class="s" d="M11 14h4M15 4v20M15 4h4M15 14h4M15 24h4"/></g>
<g transform="translate(1521 634)"><path d="M1 2h26v19H11l-5 5v-5H1z" fill="none" stroke="#5fa8e0" stroke-width="1.300"/></g>
<g transform="translate(1563 634)"><path class="s" d="M3 1h14l8 7v19H3zM17 1v7h8"/><circle cx="5" cy="11" r="2.500" fill="#4f9ddc"/><path d="M11 12h9M8 18h12" stroke="#4f9ddc" stroke-width="1.300"/></g>
<g transform="translate(1605 634)"><path class="s" d="M6 4H1v4c0 4 3 7 7 8M22 4h5v4c0 4-3 7-7 8M6 4v6c0 5 4 8 8 8s8-3 8-8V4M14 18v4M8 26h12"/><rect x="6" y="1" width="16" height="4" fill="none" stroke="#5fa8e0" stroke-width="1.300"/><path d="M6 8h16" stroke="#5fa8e0"/><rect x="8" y="22" width="12" height="4" fill="none" stroke="#5fa8e0" stroke-width="1.200"/></g>

<g transform="translate(1397 677)"><path class="s" d="M1 2h15l7 7v19H1zM16 2v7h7"/><rect x="4" y="18" width="4" height="7" fill="#ccc"/><rect x="10" y="20" width="4" height="5" fill="#ccc"/><rect x="16" y="13" width="4" height="12" fill="#ccc"/></g>
<g transform="translate(1437 677)"><rect class="s" x="2" y="6" width="26" height="20"/><text x="5" y="21" font-size="12" textLength="22" lengthAdjust="spacingAndGlyphs" style="fill:#4f9ddc">123</text><path d="M6 0h7l-4 7h3L2 18l3-9H1z" fill="#f0a838" stroke="#141414" stroke-width=".6"/></g>
<g transform="translate(1479 677)"><path class="s" d="M14 3h11v11M14 3v8M1 17v10h11V17z"/><rect x="8" y="6" width="5" height="6" fill="#0e65b2"/><path d="M14 16h14l-5 7v6l-4-1v-5z" fill="#141414" stroke="#c4c4c4" stroke-width="1.300"/><path d="M6 0h7l-4 7h3L2 18l3-9H1z" fill="#f0a838" stroke="#141414" stroke-width=".6"/></g>
<g transform="translate(1521 677)"><path d="M3 15v13h18M12 2h15v10" fill="none" stroke="#4f9ddc" stroke-width="1.500"/><path d="M6 24l4-9 6-1 1-7 7-2v4l-4 4-1 5-5 4-3 5z" fill="#0e65b2"/><path d="M4 0c-4 0-5 3-5 6 0 3 3 7 5 12 2-5 5-9 5-12 0-3-1-6-5-6z" fill="#e07a0e" transform="translate(1 0)"/><circle cx="5" cy="6" r="1.800" fill="#141414"/><circle cx="24" cy="25" r="3.500" fill="#e07a0e"/><circle cx="27" cy="16" r="2" fill="#e07a0e"/></g>
<g transform="translate(1563 677)" fill="none" stroke="#8b3fa3" stroke-width="1.500"><path d="M14 1l-13 13 13 13M14 1l13 13-13 13M8 7l13 13M20 7L7 20"/><path d="M14 1l7 6-7 7-7-7z M14 14l7 6-7 7-7-7z"/></g>
<g transform="translate(1605 677)" fill="none" stroke="#1f86e0" stroke-width="1.500"><path d="M1 3h18l9 11-9 11H1l9-11zM10 14l8-8M9 25l10-11"/></g>

<g fill="#fff"><circle cx="1403" cy="731" r="1.800"/><circle cx="1409" cy="731" r="1.800"/><circle cx="1415" cy="731" r="1.800"/></g>

<!-- wells -->
<text x="1397" y="791.500" font-size="17" textLength="50" lengthAdjust="spacingAndGlyphs" style="fill:#f2f2f2">Values</text>
<rect x="1385.500" y="806.500" width="254" height="41" rx="3" fill="none" stroke="#5e5e5e" stroke-dasharray="3 2.500"/>
<text x="1401" y="832" class="p" textLength="160" lengthAdjust="spacingAndGlyphs">Add data fields here</text>
<text x="1397.500" y="882" class="p" font-weight="700" textLength="103" lengthAdjust="spacingAndGlyphs">Drill through</text>
<text x="1397" y="919" font-size="17" textLength="100" lengthAdjust="spacingAndGlyphs" style="fill:#f2f2f2">Cross-report</text>
<rect x="1568.500" y="901.500" width="47" height="23" rx="11.500" fill="none" stroke="#9e9e9e"/><circle cx="1580.500" cy="913" r="6" fill="#aaa"/>
<text x="1591" y="919" font-size="14" textLength="18" lengthAdjust="spacingAndGlyphs" style="fill:#aaa">Off</text>
<text x="1397" y="959" font-size="17" textLength="111" lengthAdjust="spacingAndGlyphs" style="fill:#f2f2f2">Keep all filters</text>
<rect x="1568" y="941" width="48" height="24" rx="12" fill="#2bab94"/><circle cx="1603" cy="953" r="6" fill="#2b2b2b"/>
<text x="1575" y="959" font-size="14" textLength="17" lengthAdjust="spacingAndGlyphs" style="fill:#22463f">On</text>
<rect x="1385.500" y="980.500" width="254" height="37" rx="3" fill="#000" stroke="#5e5e5e" stroke-dasharray="3 2.500"/>
<text x="1398" y="1006" class="p" textLength="226" lengthAdjust="spacingAndGlyphs" style="fill:#fff">Add drill-through fields here</text>

<!-- data pane -->
<text x="1662" y="292" font-size="24" font-weight="700" textLength="50" lengthAdjust="spacingAndGlyphs" style="fill:#fff">Data</text>
<path d="M1894 279l5 5-5 5M1899 279l5 5-5 5" fill="none" stroke="#fff" stroke-width="1.800"/>
<rect x="1656.500" y="323.500" width="257" height="35" rx="5" fill="#2b2b2b" stroke="#777"/>
<circle cx="1683" cy="339" r="7.500" fill="none" stroke="#aaa" stroke-width="1.400"/><path d="M1689 345l7 7" stroke="#aaa" stroke-width="1.400"/>
<text x="1707" y="349" font-size="20" textLength="61" lengthAdjust="spacingAndGlyphs" style="fill:#8a8a8a">Search</text>
<path d="M1676 387l6 5.500-6 5.500" fill="none" stroke="#ddd" stroke-width="1.400"/>
<path d="M1697 383h12c2 0 3 1 3 3v11c0 2-1 3-3 3h-12c-2 0-3-1-3-3v-11c0-2 1-3 3-3zM1694 388h18M1694 394h18M1700 383v17M1706 383v17" fill="none" stroke="#e8e8e8" stroke-width="1.200"/>
<text x="1720" y="398" class="p" textLength="119" lengthAdjust="spacingAndGlyphs">Student Survey</text>
<path d="M1676 423l6 5.500-6 5.500" fill="none" stroke="#ddd" stroke-width="1.400"/>
<path d="M1697 419h12c2 0 3 1 3 3v11c0 2-1 3-3 3h-12c-2 0-3-1-3-3v-11c0-2 1-3 3-3zM1694 424h18M1694 430h18M1700 419v17M1706 419v17" fill="none" stroke="#e8e8e8" stroke-width="1.200"/>
<text x="1720" y="433.500" class="p" textLength="120" lengthAdjust="spacingAndGlyphs">User Mappings</text>
</svg>
</body></html>
